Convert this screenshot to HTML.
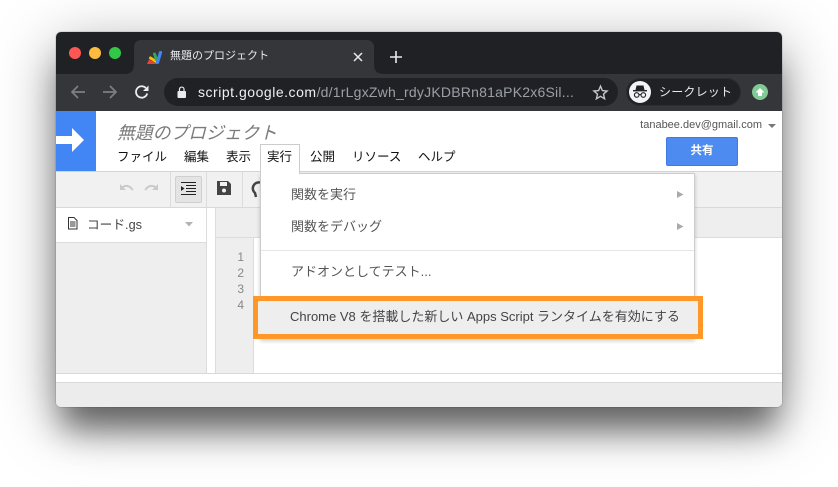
<!DOCTYPE html>
<html lang="ja"><head><meta charset="utf-8">
<style>
html,body{margin:0;padding:0;background:#fff;width:838px;height:487px;overflow:hidden}
body{position:relative;font-family:"Liberation Sans","Noto Sans CJK JP",sans-serif}
.win{position:absolute;left:56px;top:32px;width:726px;height:375px;border-radius:5px;box-shadow:0 28px 30px -6px rgba(0,0,0,.48),0 14px 60px rgba(0,0,0,.36),0 0 1px rgba(0,0,0,.6);}
.clip{position:absolute;left:56px;top:32px;width:726px;height:375px;border-radius:5px;overflow:hidden;background:#fff}
.a{position:absolute;white-space:nowrap}
.b{position:absolute}
svg{position:absolute;overflow:visible}
</style></head><body>
<div class="win"></div>
<div class="b" style="left:0;top:0;width:838px;height:487px;">
<div class="clip"></div>
<div class="b" style="left:56px;top:32px;width:726px;height:42px;background:#202124;border-radius:5px 5px 0 0"></div>
<div class="b" style="left:56px;top:74px;width:726px;height:37px;background:#35363a"></div>
<div class="b" style="left:134px;top:40px;width:240px;height:34px;background:#35363a;border-radius:7px 7px 0 0"></div>
<svg style="left:124px;top:64px" width="260" height="10"><path d="M0 10C6 10 10 8 10 0V10Z" fill="#35363a"/><path d="M250 0C250 8 254 10 260 10H250Z" fill="#35363a"/></svg>
<div class="b" style="left:69px;top:47px;width:12px;height:12px;border-radius:50%;background:#fc5753"></div>
<div class="b" style="left:89px;top:47px;width:12px;height:12px;border-radius:50%;background:#fdbc40"></div>
<div class="b" style="left:109px;top:47px;width:12px;height:12px;border-radius:50%;background:#33c748"></div>
<svg style="left:146px;top:50px" width="17" height="15" viewBox="0 0 17 15">
<path d="M1 14L3 9.500L11 14Z" fill="#ea4335"/>
<path d="M4.500 8L10 11.500" stroke="#fbbc04" stroke-width="3" stroke-linecap="round"/>
<path d="M8.500 4L10.500 9.500" stroke="#34a853" stroke-width="3" stroke-linecap="round"/>
<path d="M14.500 2.500L11.500 12.500" stroke="#4285f4" stroke-width="3.200" stroke-linecap="round"/>
</svg>
<div class="a" style="left:170px;top:48px;font-size:11px;line-height:17px;color:#e8eaed">無題のプロジェクト</div>
<svg style="left:353px;top:52px" width="10" height="10"><path d="M1 1L9 9M9 1L1 9" stroke="#e8eaed" stroke-width="1.5"/></svg>
<svg style="left:390px;top:51px" width="12" height="12"><path d="M6 0V12M0 6H12" stroke="#e8eaed" stroke-width="1.6"/></svg>
<svg style="left:70px;top:84px" width="16" height="16"><path d="M15 8H2M8 2L2 8L8 14" fill="none" stroke="#7d7f83" stroke-width="1.7"/></svg>
<svg style="left:102px;top:84px" width="16" height="16"><path d="M1 8H14M8 2L14 8L8 14" fill="none" stroke="#7d7f83" stroke-width="1.7"/></svg>
<svg style="left:134px;top:84px" width="16" height="16"><path d="M13.200 9.500A5.700 5.700 0 1 1 11.800 4" fill="none" stroke="#eceef0" stroke-width="1.800"/><path d="M14.500 1.500V7H9Z" fill="#eceef0"/></svg>
<div class="b" style="left:164px;top:78px;width:454px;height:28px;border-radius:14px;background:#202124"></div>
<svg style="left:177px;top:86px" width="10" height="12"><rect x="0.500" y="5" width="8.500" height="7" rx="1" fill="#e8eaed"/><path d="M2.500 5V3.300A2.200 2.200 0 0 1 7 3.300V5" fill="none" stroke="#e8eaed" stroke-width="1.200"/></svg>
<div class="a" style="left:198px;top:83px;font-size:14px;line-height:18px;color:#9aa0a6;letter-spacing:.22px"><span style="color:#eef0f2;letter-spacing:.52px">script.google.com</span>/d/1rLgxZwh_rdyJKDBRn81aPK2x6Sil...</div>
<svg style="left:593px;top:85px" width="15" height="15" viewBox="0 0 15 15"><path d="M7.500 1.200L9.400 5.600L14.100 6L10.500 9.100L11.600 13.800L7.500 11.300L3.400 13.800L4.500 9.100L.9 6L5.600 5.600Z" fill="none" stroke="#c4c7ca" stroke-width="1.400"/></svg>
<div class="b" style="left:626px;top:78px;width:115px;height:28px;border-radius:14px;background:#202124;box-shadow:inset 0 0 0 1px #2d2e32"></div>
<div class="b" style="left:629px;top:81px;width:22px;height:22px;border-radius:50%;background:#f1f3f4"></div>
<svg style="left:632px;top:84px" width="16" height="16" viewBox="0 0 16 16"><path d="M4.500 1.500H11.500L12.500 6H3.500Z" fill="#202124"/><rect x="1" y="6" width="14" height="1.400" fill="#202124"/><circle cx="4.700" cy="11" r="2.300" fill="none" stroke="#202124" stroke-width="1.100"/><circle cx="11.300" cy="11" r="2.300" fill="none" stroke="#202124" stroke-width="1.100"/><path d="M7 10.600H9" stroke="#202124" stroke-width="1.100"/></svg>
<div class="a" style="left:659px;top:84px;font-size:12px;line-height:16px;color:#e8eaed;letter-spacing:.2px">シークレット</div>
<div class="b" style="left:752px;top:84px;width:16px;height:16px;border-radius:50%;background:#81c995"></div>
<svg style="left:755px;top:87px" width="10" height="10"><path d="M5 1L9.500 5.500H7V9H3V5.500H.5Z" fill="#fff"/></svg>

<div class="b" style="left:56px;top:111px;width:40px;height:60px;background:#4285f4"></div>
<svg style="left:56px;top:128px" width="30" height="26"><path d="M0 8H16V0L28 12L16 24V16H0Z" fill="#fff"/></svg>
<div class="a" style="left:117px;top:121px;font-size:17.800px;line-height:24px;color:#7b7b7b;font-style:italic">無題のプロジェクト</div>
<div class="a" style="left:117px;top:149px;font-size:12.500px;line-height:16px;color:#111">ファイル</div>
<div class="a" style="left:184px;top:149px;font-size:12.500px;line-height:16px;color:#111">編集</div>
<div class="a" style="left:226px;top:149px;font-size:12.500px;line-height:16px;color:#111">表示</div>
<div class="a" style="left:310px;top:149px;font-size:12.500px;line-height:16px;color:#111">公開</div>
<div class="a" style="left:352px;top:149px;font-size:12.500px;line-height:16px;color:#111">リソース</div>
<div class="a" style="left:418px;top:149px;font-size:12.500px;line-height:16px;color:#111">ヘルプ</div>
<div class="a" style="right:76px;top:118px;font-size:11px;line-height:15px;color:#555">tanabee.dev@gmail.com</div>
<svg style="left:768px;top:124px" width="9" height="5"><path d="M0 0H8L4 4Z" fill="#777"/></svg>
<div class="b" style="left:666px;top:137px;width:70px;height:27px;background:#4d8bf0;border:1px solid #3c7ae4;border-radius:2px;color:#fff;font-size:11.500px;font-weight:bold;line-height:27px;text-align:center">共有</div>

<div class="b" style="left:56px;top:171px;width:726px;height:1px;background:#d4d4d4"></div>
<div class="b" style="left:56px;top:172px;width:726px;height:35px;background:#f1f1f1"></div>
<div class="b" style="left:56px;top:207px;width:726px;height:1px;background:#d9d9d9"></div>
<div class="b" style="left:170px;top:172px;width:1px;height:35px;background:#dcdcdc"></div>
<div class="b" style="left:206px;top:172px;width:1px;height:35px;background:#dcdcdc"></div>
<div class="b" style="left:242px;top:172px;width:1px;height:35px;background:#dcdcdc"></div>
<svg style="left:118px;top:183px" width="16" height="11"><path d="M2 1V7H8L5.600 4.800C8 3 11.500 3.600 14 7.600L15.500 6.600C12.500 1.500 7.500 .8 4.200 3.400Z" fill="#c9c9c9" /></svg>
<svg style="left:144px;top:183px" width="16" height="11"><path d="M14 1V7H8L10.400 4.800C8 3 4.500 3.600 2 7.600L.5 6.600C3.500 1.500 8.500 .8 11.800 3.400Z" fill="#c9c9c9"/></svg>
<div class="b" style="left:175px;top:176px;width:25px;height:25px;background:#e4e4e4;border:1px solid #d0d0d0;border-radius:2px"></div>
<svg style="left:181px;top:182px" width="15" height="14"><path d="M0 .5H15M5 3.500H15M5 6.500H15M5 9.500H15M0 12.500H15" stroke="#222" stroke-width="1.100"/><path d="M0 4L3.500 6.500L0 9Z" fill="#222"/></svg>
<svg style="left:217px;top:181px" width="14" height="14"><path d="M0 0H11L14 3V14H0Z" fill="#444"/><rect x="3" y="1" width="7" height="4" fill="#f1f1f1"/><circle cx="7" cy="9.500" r="2" fill="#f1f1f1"/></svg>
<svg style="left:250px;top:181px" width="12" height="18"><path d="M10 1.500A6 6 0 0 0 5 12L6 16" fill="none" stroke="#444" stroke-width="2.500"/></svg>

<div class="b" style="left:56px;top:208px;width:150px;height:34px;background:#fff"></div>
<div class="b" style="left:56px;top:242px;width:150px;height:1px;background:#dcdcdc"></div>
<div class="b" style="left:56px;top:243px;width:150px;height:130px;background:#eee"></div>
<div class="b" style="left:206px;top:208px;width:1px;height:165px;background:#dcdcdc"></div>
<svg style="left:68px;top:217px" width="10" height="13"><path d="M.5 .5H6L9 3.500V12H.5Z" fill="#fff" stroke="#333"/><path d="M2 5H7.500M2 7H7.500M2 9H7.500" stroke="#333"/></svg>
<div class="a" style="left:87px;top:217px;font-size:12.700px;line-height:17px;color:#444">コード.gs</div>
<svg style="left:185px;top:222px" width="8" height="5"><path d="M0 0H8L4 4.500Z" fill="#b3b3b3"/></svg>
<div class="b" style="left:216px;top:208px;width:566px;height:29px;background:#eee"></div>
<div class="b" style="left:216px;top:237px;width:566px;height:1px;background:#dcdcdc"></div>
<div class="b" style="left:216px;top:238px;width:37px;height:135px;background:#eee"></div>
<div class="b" style="left:215px;top:208px;width:1px;height:165px;background:#dcdcdc"></div>
<div class="b" style="left:253px;top:238px;width:1px;height:135px;background:#dcdcdc"></div>
<div class="a" style="left:230px;top:249px;width:14px;text-align:right;font-size:12px;line-height:16px;color:#888">1<br>2<br>3<br>4</div>
<div class="b" style="left:56px;top:373px;width:726px;height:1px;background:#d9d9d9"></div>
<div class="b" style="left:56px;top:382px;width:726px;height:1px;background:#d9d9d9"></div>
<div class="b" style="left:56px;top:383px;width:726px;height:24px;background:#ececec;border-radius:0 0 5px 5px"></div>

<div class="b" style="left:260px;top:173px;width:435px;height:166px;background:#fff;border:1px solid #ccc;box-sizing:border-box;box-shadow:0 2px 4px rgba(0,0,0,.2)"></div>
<div class="b" style="left:260px;top:144px;width:40px;height:30px;background:#fff;border:1px solid #ccc;border-bottom:0;box-sizing:border-box"></div>
<div class="a" style="left:267px;top:149px;font-size:12.500px;line-height:16px;color:#111">実行</div>
<div class="a" style="left:291px;top:187px;font-size:13px;line-height:16px;color:#555">関数を実行</div>
<div class="a" style="left:291px;top:219px;font-size:13px;line-height:16px;color:#555">関数をデバッグ</div>
<svg style="left:677px;top:191px" width="7" height="7"><path d="M0 0L6.500 3.500L0 7Z" fill="#aaa"/></svg>
<svg style="left:677px;top:223px" width="7" height="7"><path d="M0 0L6.500 3.500L0 7Z" fill="#aaa"/></svg>
<div class="b" style="left:261px;top:250px;width:433px;height:1px;background:#e6e6e6"></div>
<div class="a" style="left:291px;top:264px;font-size:13px;line-height:16px;color:#555">アドオンとしてテスト...</div>
<div class="b" style="left:253px;top:296px;width:450px;height:43px;box-sizing:border-box;border:5px solid #ff9729;background:#eee"></div>
<div class="a" style="left:290px;top:309px;font-size:13px;line-height:16px;color:#444">Chrome V8 を搭載した新しい Apps Script ランタイムを有効にする</div>
</div>
</body></html>
